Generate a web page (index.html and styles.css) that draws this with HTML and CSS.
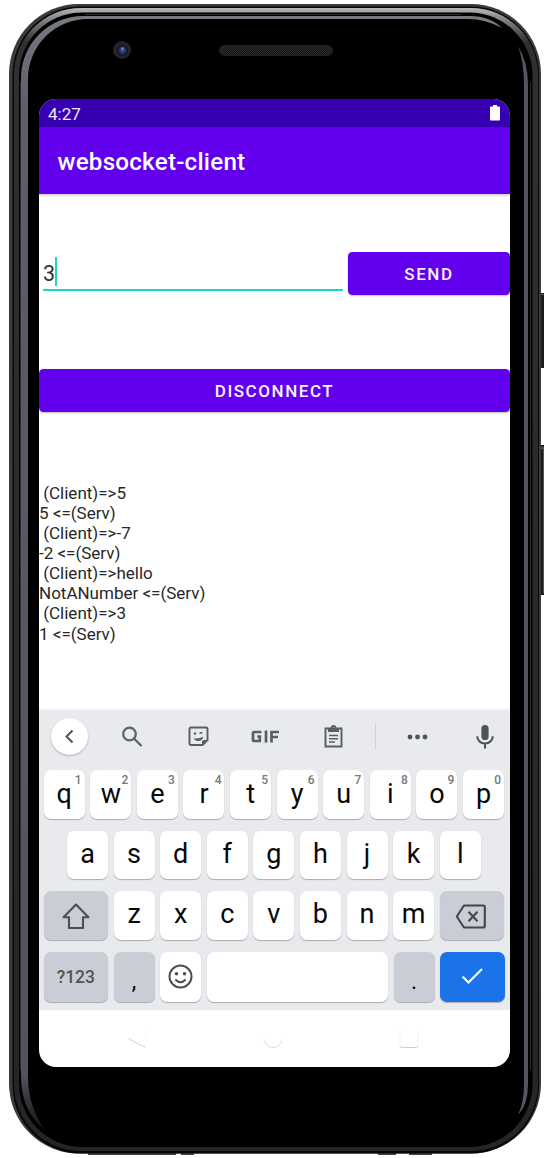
FILE: index.html
```html
<!DOCTYPE html>
<html lang="en">
<head>
<meta charset="utf-8">
<title>websocket-client</title>
<link rel="stylesheet" href="styles.css">
</head>
<body>
<div class="device">
  <svg class="frame" width="544" height="1158" viewBox="0 0 544 1158" aria-hidden="true">
    <defs>
      <linearGradient id="rim" x1="0" y1="0" x2="0" y2="1">
        <stop offset="0" stop-color="#b4b8ba"/><stop offset=".008" stop-color="#8a8e90"/><stop offset=".03" stop-color="#303030"/><stop offset="1" stop-color="#252525"/>
      </linearGradient>
      <linearGradient id="glass" x1="0" y1="0" x2="0" y2="1">
        <stop offset="0" stop-color="#777a80"/><stop offset=".08" stop-color="#5c5f67"/><stop offset=".95" stop-color="#50535b"/><stop offset="1" stop-color="#111"/>
      </linearGradient>
      <pattern id="mesh" width="2" height="2" patternUnits="userSpaceOnUse"><path fill="#171a1a" d="M0 0h2v2H0z"/><path fill="#272a2a" d="M0 0h1v1H0zM1 1h1v1H1z"/></pattern>
      <radialGradient id="lens"><stop offset="0" stop-color="#4b5c94"/><stop offset=".5" stop-color="#263160"/><stop offset="1" stop-color="#0d1020"/></radialGradient>
    </defs>
    <path fill="#1c1c1c" d="M540 293h4v75h-4zM540 445h4v150h-4z"/>
    <path fill="#555" d="M541 294h3v1h-3zM541 447h3v2h-3zM543 449h1v144h-1z"/>
    <path fill="#444" d="M88 1153h88v2H88zM181 1153h13v2h-13zM378 1153h18v2h-18zM409 1153h23v2h-23z"/>
    <rect x="9" y="4" width="532" height="1149.500" rx="70" fill="#3b3b3b"/>
    <rect x="12.500" y="6.500" width="526.500" height="1147" rx="68" fill="#080808"/>
    <rect x="14" y="8" width="524" height="1143" rx="67" fill="url(#rim)"/>
    <rect x="19" y="12.500" width="513.500" height="1134.500" rx="63" fill="#000"/>
    <path fill="none" stroke="#2b2d30" d="M85 14.500H461M20.500 82V1070M530.500 82V1070"/>
    <path fill="url(#glass)" d="M46 1131Q21 1112 21 1076V78A62 62 0 0 1 83 16H470Q490 16 502 28Q485 19 468 19H88A60 60 0 0 0 28 79V1076Q28 1108 46 1131Z"/>
    <path fill="#53565e" d="M518 46Q528 62 528 85V1085Q528 1105 518 1115Q524 1102 524 1085V85Q524 62 518 46Z"/>
    <circle cx="122" cy="50" r="9" fill="#222426"/><circle cx="122.500" cy="50.500" r="5.500" fill="url(#lens)"/><circle cx="122.500" cy="48.500" r="1.200" fill="#7b91bd"/>
    <rect x="219.500" y="45.500" width="113" height="10" rx="5" fill="url(#mesh)" stroke="#202222"/>
  </svg>

  <main class="screen">
    <div class="status"><span>4:27</span>
      <svg width="10" height="16" viewBox="0 0 10 16"><path fill="#fff" d="M3 0h4v1.500h2.300q.7 0 .7.700v12.600q0 .7-.7.700H.7q-.7 0-.7-.7V2.200q0-.7.7-.7H3z"/></svg>
    </div>
    <header class="appbar">websocket-client</header>
    <section class="content">
      <div class="compose">
        <div class="field"><span>3</span><i class="caret"></i></div>
        <button class="btn send">SEND</button>
      </div>
      <button class="btn disconnect">DISCONNECT</button>
      <pre class="log"> (Client)=&gt;5
5 &lt;=(Serv)
 (Client)=&gt;-7
-2 &lt;=(Serv)
 (Client)=&gt;hello
NotANumber &lt;=(Serv)
 (Client)=&gt;3
1 &lt;=(Serv)</pre>
    </section>

    <section class="keyboard">
      <div class="tools">
        <svg class="back" width="37" height="37" viewBox="0 0 37 37"><path fill="none" stroke="#505356" stroke-width="2" d="M21.500 12.500l-6 6 6 6"/></svg>
        <svg class="search" width="22" height="22" viewBox="0 0 22 22"><g fill="none" stroke="#606366" stroke-width="2.300"><circle cx="8.500" cy="8" r="6.300"/><path d="M13 12.500l7.500 7.500"/></g></svg>
        <svg class="sticker" width="21" height="21" viewBox="0 0 21 21"><path fill="none" stroke="#5b5e61" stroke-width="1.900" d="M3 1.500h15q1.500 0 1.500 1.500v11l-5 5H3q-1.500 0-1.500-1.500V3Q1.500 1.500 3 1.500z"/><path fill="#5b5e61" d="M14 20v-4q0-2 2-2h4z"/><circle cx="7" cy="7.500" r="1.300" fill="#5b5e61"/><path fill="none" stroke="#5b5e61" stroke-width="1.500" d="M11.500 7.500q1.500-1.300 3-.5"/><path fill="#5b5e61" d="M5.500 12.200q5.500.8 10-1.700-1.500 4.500-5 4.500-3.500 0-5-2.800z"/></svg>
        <svg class="gif" width="29" height="13" viewBox="0 0 29 13" role="img" aria-label="GIF"><path fill="none" stroke="#5b5e61" stroke-width="2.700" d="M10.500 2H3.200Q2 2 2 3.200v6.600Q2 11 3.200 11h5.600V6.500H6.200M15 .5v12M20.500 12.500V2H28M20.500 7h6.500"/></svg>
        <svg class="clip" width="19" height="23" viewBox="0 0 19 23"><path fill="none" stroke="#5b5e61" stroke-width="1.900" d="M1.500 3.500h16v18h-16z"/><path fill="#5b5e61" fill-rule="evenodd" d="M4 7V3h2.500Q7 0 9.500 0T12.500 3H15v4zM9.500 2a1.200 1.200 0 1 0 .01 0z"/><path stroke="#5b5e61" stroke-width="1.600" d="M5 10.500h9M5 13.700h9M5 17h6"/></svg>
        <i class="divider"></i>
        <svg class="more" width="21" height="6" viewBox="0 0 21 6" fill="#505356"><circle cx="3" cy="3" r="2.400"/><circle cx="10.500" cy="3" r="2.400"/><circle cx="18" cy="3" r="2.400"/></svg>
        <svg class="mic" width="18" height="24" viewBox="0 0 18 24"><rect x="5.400" y="0" width="7.200" height="15" rx="3.600" fill="#505356"/><path fill="none" stroke="#505356" stroke-width="2.100" d="M1.200 11.200a7.800 7.300 0 0 0 15.600 0M9 18.500v5"/></svg>
      </div>
      <div class="row">
        <div class="key">q<sup>1</sup></div><div class="key">w<sup>2</sup></div><div class="key">e<sup>3</sup></div><div class="key">r<sup>4</sup></div><div class="key">t<sup>5</sup></div><div class="key">y<sup>6</sup></div><div class="key">u<sup>7</sup></div><div class="key">i<sup>8</sup></div><div class="key">o<sup>9</sup></div><div class="key">p<sup>0</sup></div>
      </div>
      <div class="row middle">
        <div class="key">a</div><div class="key">s</div><div class="key">d</div><div class="key">f</div><div class="key">g</div><div class="key">h</div><div class="key">j</div><div class="key">k</div><div class="key">l</div>
      </div>
      <div class="row lower">
        <div class="key wide gray"><svg width="28" height="27" viewBox="0 0 28 27"><path fill="none" stroke="#4d4f52" stroke-width="2.100" stroke-linejoin="round" d="M14 1.500L26.500 14.200H21V25H7V14.200H1.500z"/></svg></div>
        <div class="key">z</div><div class="key">x</div><div class="key">c</div><div class="key">v</div><div class="key">b</div><div class="key">n</div><div class="key">m</div>
        <div class="key wide gray"><svg class="erase" width="32" height="25" viewBox="0 0 32 25"><path fill="none" stroke="#434548" stroke-width="2.100" stroke-linejoin="round" d="M9 1.500h19q1.800 0 1.800 1.800v18.400q0 1.800-1.800 1.800H9L1.800 12.500zM13.500 7.800l9 9.500M22.500 7.800l-9 9.500"/></svg></div>
      </div>
      <div class="row bottom">
        <div class="key wide gray num">?123</div>
        <div class="key gray punct">,</div>
        <div class="key"><svg width="25" height="25" viewBox="0 0 25 25"><g fill="none" stroke="#4d4f52" stroke-width="2"><circle cx="12.500" cy="12.500" r="11"/><path d="M7.300 15.500q5.200 5.400 10.400 0"/></g><circle cx="8.500" cy="9.800" r="1.800" fill="#4d4f52"/><circle cx="16.500" cy="9.800" r="1.800" fill="#4d4f52"/></svg></div>
        <div class="key space"></div>
        <div class="key gray punct">.</div>
        <div class="key wide enter"><svg width="24" height="19" viewBox="0 0 24 19"><path fill="none" stroke="#fff" stroke-width="2.200" d="M2.500 9.500l6 6L22 2"/></svg></div>
      </div>
    </section>
    <nav class="nav">
      <svg width="18" height="20" viewBox="0 0 18 20"><path fill="none" stroke="#d0d0d0" d="M.5 9.500l16.500 9"/><path stroke="#f6f6f6" d="M17.500 1v17"/></svg>
      <svg width="20" height="20" viewBox="0 0 20 20"><path fill="none" stroke="#dadada" d="M1.500 12q2 6.500 8.500 6.500t8.500-6.500"/><path fill="none" stroke="#f3f3f3" d="M1 8.500q0 2 .5 3.500M19 8.500q0 2-.5 3.500"/></svg>
      <svg width="20" height="20" viewBox="0 0 20 20"><path fill="none" stroke="#f3f3f3" d="M1 2v15M19 2v15"/><path fill="none" stroke="#cfcfcf" d="M1 17q0 1.500 1.500 1.500h15q1.500 0 1.500-1.500"/></svg>
    </nav>
  </main>
</div>
</body>
</html>
```
FILE: styles.css
```css
* { box-sizing: border-box; }
body { margin: 0; background: #fff; font-family: Roboto, sans-serif; overflow: hidden; }
svg { display: block; flex: none; }
.device { position: relative; width: 544px; height: 1158px; padding: 99px 34px 0 39px; }
.frame { position: absolute; inset: 0; }
.screen { position: relative; height: 968px; border-radius: 17px; overflow: hidden; background: #fff; display: flex; flex-direction: column; }
.status { height: 28px; background: #3700b3; color: #eee8fa; font-size: 17px; line-height: 30px; padding: 0 10px 0 9px; display: flex; justify-content: space-between; }
.status svg { margin-top: 6px; }
.appbar { height: 67px; flex: none; background: #6200ee; color: #fff; font-size: 24.2px; font-weight: 500; line-height: 71px; letter-spacing: .22px; padding-left: 18.500px; box-shadow: 0 1px 3px #0004; }
.content { height: 516px; flex: none; padding-top: 58px; }
.compose { display: flex; height: 44px; justify-content: space-between; }
.field { width: 300px; height: 39px; margin-left: 4px; border-bottom: 2px solid #12d8c6; color: #333; font-size: 21.500px; line-height: 43px; display: flex; }
.caret { width: 2px; height: 29px; margin-top: 5px; background: #12d8c6; }
.btn { display: block; border: 0; padding: 0; height: 43px; border-radius: 4.500px; background: #6200ee; color: #f7f2ff; font: 500 17px/44px Roboto, sans-serif; letter-spacing: 1.550px; box-shadow: 0 1px 2px #0004; }
.send { width: 162px; }
.disconnect { width: 471px; margin-top: 73px; }
.log { margin: 71px 0 0; font: 17px/20.080px Roboto, sans-serif; color: #282828; }
.keyboard { height: 300px; flex: none; background: #e8eaed; padding: 0 5.500px 0 4.700px; box-shadow: 0 -1px 2px #0001; }
.tools { height: 60px; padding: 8px 0 0 7px; display: flex; align-items: flex-start; }
.back { border-radius: 50%; background: #fff; box-shadow: 0 1px 2px #0004; }
.search { margin: 8px 0 0 33px; }
.sticker { margin: 8px 0 0 45px; }
.gif { margin: 12px 0 0 42px; }
.clip { margin: 7px 0 0 44px; }
.divider { width: 1px; height: 27px; margin: 5px 0 0 32px; background: #cfd1d4; }
.more { margin: 16px 0 0 31px; }
.mic { margin: 7px 0 0 48px; }
.row { display: flex; gap: 5.600px; height: 48.600px; margin-bottom: 12px; }
.middle { padding: 0 23.300px; }
.key { position: relative; flex: 0 0 41.010px; display: flex; align-items: center; justify-content: center; background: #fff; border-radius: 7px; font-size: 27px; line-height: 48px; color: #080808; box-shadow: 0 1px 1px #0004; }
.key sup { position: absolute; top: 4px; right: 3px; font-size: 12px; font-weight: 500; line-height: 13px; color: #75787b; }
.middle .key, .lower .key { padding-bottom: 2px; }
.lower .gray { padding: 2px 0 0; }
.erase { margin-left: -1px; }
.bottom { height: 50px; margin: 0; }
.wide { flex-basis: 64.300px; }
.gray { background: #cacdd5; }
.space { flex: 1; }
.key.num { font-size: 17.500px; font-weight: 500; color: #505356; padding-top: 1px; }
.punct { padding-top: 10px; font-size: 23px; }
.enter { background: #1a73e8; }
.nav { flex: 1; display: flex; justify-content: space-between; padding: 19px 91px 0 89px; }
```
